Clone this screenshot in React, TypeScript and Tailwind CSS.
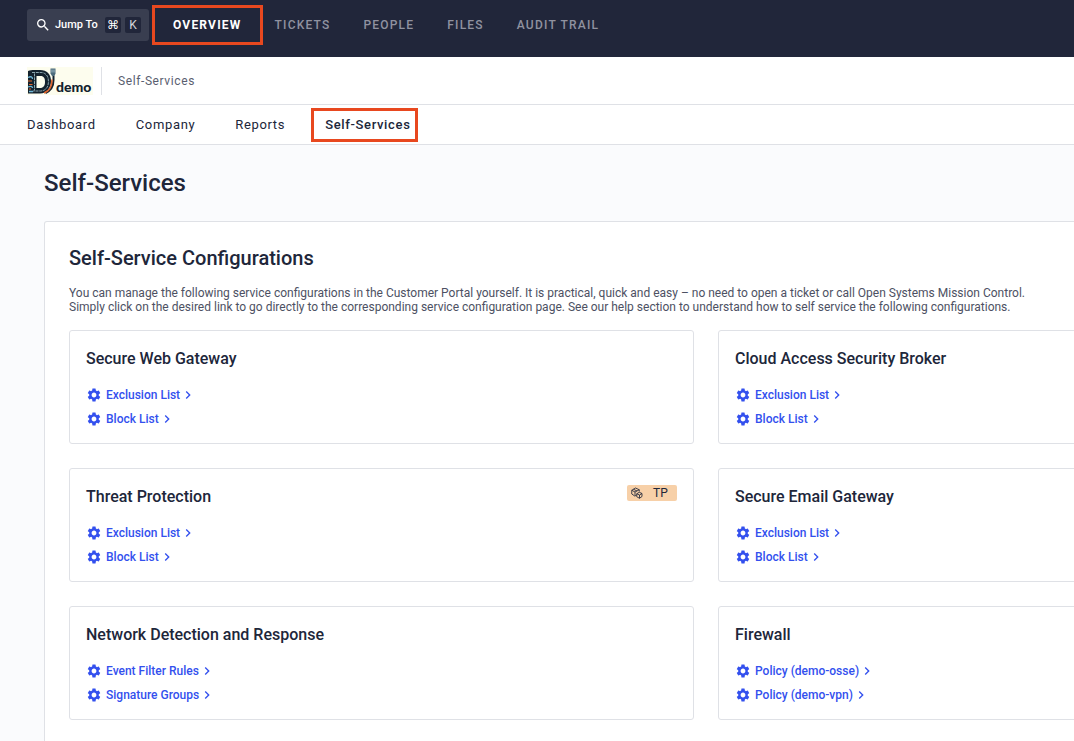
import { MdChevronRight, MdSearch, MdSettings } from 'react-icons/md'

interface Service {
  name: string
  badge?: string
  links: string[]
}

const NAV_ITEMS = ['Overview', 'Tickets', 'People', 'Files', 'Audit Trail']

const TABS = ['Dashboard', 'Company', 'Reports', 'Self-Services']

const SERVICES: Service[] = [
  { name: 'Secure Web Gateway', links: ['Exclusion List', 'Block List'] },
  { name: 'Cloud Access Security Broker', links: ['Exclusion List', 'Block List'] },
  { name: 'Threat Protection', badge: 'TP', links: ['Exclusion List', 'Block List'] },
  { name: 'Secure Email Gateway', links: ['Exclusion List', 'Block List'] },
  { name: 'Network Detection and Response', links: ['Event Filter Rules', 'Signature Groups'] },
  { name: 'Firewall', links: ['Policy (demo-osse)', 'Policy (demo-vpn)'] },
]

function Logo() {
  return (
    <a href="#" className="flex h-7 w-[66px] items-end bg-[#fdfdee] text-[#12222e]">
      <svg viewBox="0 0 29 28" className="h-7 w-[29px] shrink-0" aria-hidden="true">
        <path d="M1 4c2-1 4-1 6-1h6c7 0 11 4.500 11 11s-4 12.500-11 12.500H1z" fill="#14222e" />
        <path d="M9.500 9h4c3.500 0 4.500 2.500 4.500 6s-1.500 6-5 6H9.500z" fill="#fdfdee" />
        <path d="M7.500 6.500v17M5 5.500h9c4.500 0 7.500 3.500 7.500 9S18.500 24 13.500 24H6" fill="none" stroke="#a9c6cf" strokeWidth="0.8" strokeDasharray="3 0.8" />
        <path d="M1 10.500c3-1.500 4.500-.5 4.500 1.500M1 20c2-1 4.500-1 4.500 1M2 24.500h4" fill="none" stroke="#6fb7d6" strokeWidth="1.300" />
        <path d="M1 14h4M2 17.500h3.500M2 22h2" stroke="#e0652f" strokeWidth="1.100" />
        <path d="M18.500 26c4.500-2 8-6 8-13V9" fill="none" stroke="#14222e" strokeWidth="2" />
        <path d="M17 26c5.500-2 8-7 8-13.500" fill="none" stroke="#e0652f" strokeWidth="1.500" />
        <path d="M23.500 1.500h5v5L27.500 9h-2.500L23.500 6.500z" fill="#4c6b7c" />
        <path d="M25 2.500v3M27 2.500v3" stroke="#b9d3de" strokeWidth="0.8" />
      </svg>
      <span className="font-[Lato,sans-serif] text-sm leading-4 font-black">demo</span>
    </a>
  )
}

function CubesIcon() {
  return (
    <svg viewBox="0 0 24 24" className="size-3" fill="none" stroke="currentColor" strokeWidth="1.700" strokeLinejoin="round" aria-hidden="true">
      <path d="M11 16.500 7.500 18 1.500 14V6.500L9 2l7.500 3.500V9M1.500 6.500 8 10l8.500-4.500M8 10v7M5 4.500l7 3.500" />
      <path d="m16.500 10.500 5.500 2.500v6l-5 3.500-5.500-3v-6zM11.500 13.500l5.500 2.500 5-3M17 16v6.500" />
    </svg>
  )
}

function ServiceCard({ service }: { service: Service }) {
  return (
    <section className="rounded-[3px] border border-[#dfe1e6] px-4 pt-4 pb-3">
      <div className="flex items-start justify-between">
        <h3 className="text-base leading-6 font-medium">{service.name}</h3>
        {service.badge && (
          <span className="flex h-4 w-[50px] items-center gap-2.5 rounded-xs bg-[#f7d0a8] pl-1 text-xs">
            <CubesIcon />
            {service.badge}
          </span>
        )}
      </div>
      <ul className="mt-3">
        {service.links.map((link) => (
          <li key={link} className="flex">
            <a href="#" className="flex h-6 items-center text-xs font-medium text-[#3350ee]">
              <MdSettings className="mr-1 size-4" />
              {link}
              <MdChevronRight className="size-4" />
            </a>
          </li>
        ))}
      </ul>
    </section>
  )
}

export default function App() {
  return (
    <div className="flex min-h-screen flex-col overflow-hidden bg-[#fafbfd] font-[Roboto,sans-serif] text-[#20263a]">
      <header className="flex items-center bg-[#21263a] pt-[9px] pb-4 pl-[27px]">
        <button type="button" className="flex h-8 w-[122px] items-center rounded-[3px] bg-[#393e50] px-2 text-white">
          <MdSearch className="mr-1 size-4" />
          <span className="text-[11px] font-medium">Jump To</span>
          <span className="ml-auto flex gap-1 text-xs leading-4">
            <kbd className="size-4 rounded-xs bg-[#21263a] font-['DejaVu_Sans',sans-serif]">⌘</kbd>
            <kbd className="size-4 rounded-xs bg-[#21263a] font-[Roboto,sans-serif] text-[#d3d4d8]">K</kbd>
          </span>
        </button>
        <nav className="ml-6 flex gap-[33px] text-xs font-medium tracking-widest text-[#9092a0] uppercase">
          {NAV_ITEMS.map((item, i) => (
            <a key={item} href="#" className={i === 0 ? 'relative font-bold text-white' : undefined}>
              {item}
              {i === 0 && <span className="absolute -inset-x-[21px] -inset-y-3 border-3 border-[#e8481f]" />}
            </a>
          ))}
        </nav>
      </header>

      <div className="flex h-12 items-center border-b border-[#dfe1e6] bg-white pl-[27px]">
        <Logo />
        <span className="ml-2 h-7 border-l border-[#dfe1e6]" />
        <span className="ml-4 text-xs tracking-wider text-[#5a5e70]">Self-Services</span>
      </div>

      <nav className="flex h-10 items-center gap-10 border-b border-[#dfe1e6] bg-white pl-[27px] text-[13px] leading-[18px] tracking-wider">
        {TABS.map((tab) => (
          <a key={tab} href="#" className={tab === 'Self-Services' ? 'relative font-medium' : undefined}>
            {tab}
            {tab === 'Self-Services' && <span className="absolute -inset-y-2 -right-2 -left-3.5 border-3 border-[#e8481f]" />}
          </a>
        ))}
      </nav>

      <main className="flex flex-1 flex-col pt-[22px] pl-11">
        <h1 className="text-2xl leading-8 font-medium">Self-Services</h1>
        <div className="mt-[22px] min-w-[1324px] flex-1 rounded-t-[3px] border border-b-0 border-[#dfe1e6] bg-white px-6 pt-6 pb-4">
          <h2 className="text-xl leading-6 font-medium">Self-Service Configurations</h2>
          <p className="mt-4 text-xs leading-[14px] text-[#4d5163]">
            You can manage the following service configurations in the Customer Portal yourself. It is practical, quick and easy – no need to open a ticket or call Open Systems Mission Control.
            <br />
            Simply click on the desired link to go directly to the corresponding service configuration page. See our help section to understand how to self service the following configurations.
          </p>
          <div className="mt-4 grid grid-cols-2 gap-6">
            {SERVICES.map((service) => (
              <ServiceCard key={service.name} service={service} />
            ))}
          </div>
        </div>
      </main>
    </div>
  )
}
